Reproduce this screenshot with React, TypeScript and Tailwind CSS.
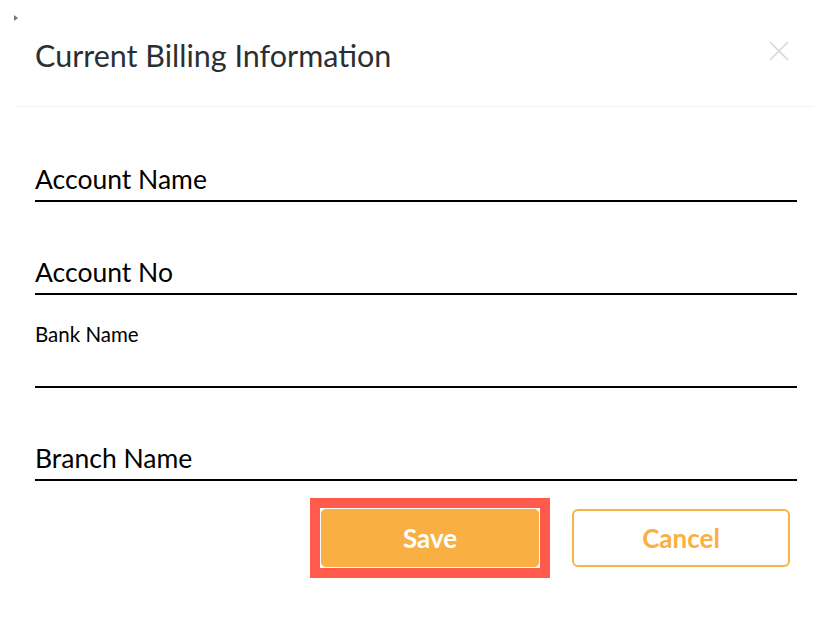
import React from "react";

function Field({ label, small }: { label: string; small?: boolean }) {
  return (
    <div className="h-[93px] flex flex-col justify-end border-b-2 border-black">
      {small ? (
        <div className="flex-1 pt-[27px] text-[20.5px] leading-[24px] text-black">{label}</div>
      ) : (
        <div className="text-[26.5px] leading-[30px] pb-[6px] text-black">{label}</div>
      )}
    </div>
  );
}

export default function App() {
  return (
    <div
      className="w-[830px] h-[626px] bg-white relative overflow-hidden"
      style={{ fontFamily: "Lato, 'Noto Sans', sans-serif" }}
    >
      <div className="absolute left-[14px] top-[15px] w-0 h-0 border-l-[4px] border-l-[#777] border-y-[3px] border-y-transparent" />
      <div className="mx-4 h-[107px] border-b border-[#f2f2f2] flex items-center justify-between pl-[19px] pr-[25px] pb-[2px]">
        <h1 className="text-[30.5px] leading-[36px] text-[#2b2f33] mt-[6px]">Current Billing Information</h1>
        <svg width="20" height="20" viewBox="0 0 20 20" className="-mt-[2px]">
          <path d="M1 1 L19 19 M19 1 L1 19" stroke="#d3d6da" strokeWidth="1.6" fill="none" />
        </svg>
      </div>
      <div className="pl-[35px] pr-[33px] mt-[2px]">
        <Field label="Account Name" />
        <Field label="Account No" />
        <Field label="Bank Name" small />
        <Field label="Branch Name" />
      </div>
      <div className="flex justify-end items-center gap-[22px] pr-[40px] mt-[17px]">
        <div className="bg-[#ff5a4c] p-[10px]">
          <div className="bg-white">
            <button className="block w-[220px] h-[60px] rounded-[6px] border border-white bg-[#f9af41] text-white font-bold text-[26px]">
              Save
            </button>
          </div>
        </div>
        <button className="w-[218px] h-[58px] rounded-[6px] border-2 border-[#f9b246] bg-white text-[#f9af41] font-bold text-[26px]">
          Cancel
        </button>
      </div>
    </div>
  );
}
